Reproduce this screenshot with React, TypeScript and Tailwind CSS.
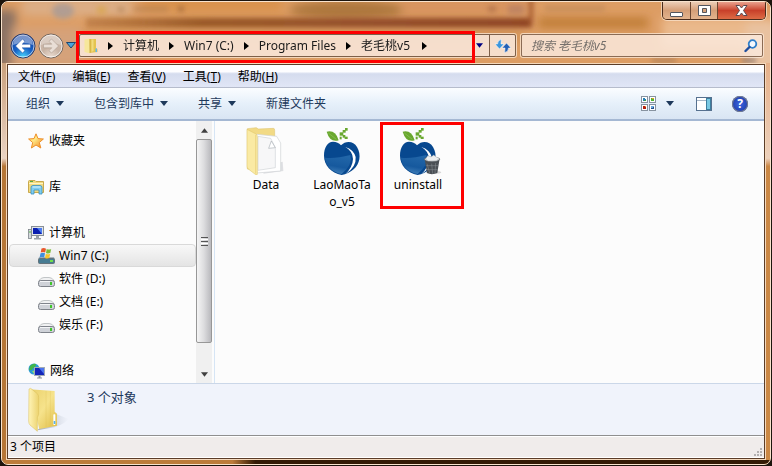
import type { ReactNode } from "react";

const crumbs = ["计算机", "Win7 (C:)", "Program Files", "老毛桃v5"];

const menus = [
  { label: "文件", key: "F" },
  { label: "编辑", key: "E" },
  { label: "查看", key: "V" },
  { label: "工具", key: "T" },
  { label: "帮助", key: "H" },
];

const commands = [
  { label: "组织", menu: true },
  { label: "包含到库中", menu: true },
  { label: "共享", menu: true },
  { label: "新建文件夹", menu: false },
];

/* blurred desktop showing through the glass title bar */
function GlassBackdrop() {
  return (
    <svg
      className="absolute inset-0 h-full w-full"
      viewBox="0 0 768 62"
      preserveAspectRatio="none"
      aria-hidden="true"
    >
      <defs>
        <filter id="soft" x="-20%" y="-60%" width="140%" height="220%">
          <feGaussianBlur stdDeviation="5" />
        </filter>
        <filter id="soft2" x="-20%" y="-100%" width="140%" height="300%">
          <feGaussianBlur stdDeviation="2.5" />
        </filter>
        <linearGradient id="band" x1="0" x2="1">
          <stop offset="0" stopColor="#a8672f" stopOpacity="0.5" />
          <stop offset="0.25" stopColor="#9a5a26" />
          <stop offset="0.6" stopColor="#95502b" />
          <stop offset="1" stopColor="#8f4524" />
        </linearGradient>
      </defs>
      <rect width="768" height="62" fill="#dd9d64" />
      <g filter="url(#soft)">
        <rect x="-10" y="8" width="24" height="60" fill="#8b7263" />
        <rect x="20" y="-4" width="110" height="18" fill="#dcae86" />
        <rect x="140" y="-4" width="140" height="14" fill="#d9924c" />
        <ellipse cx="345" cy="8" rx="58" ry="10" fill="#ad773e" />
        <rect x="400" y="-4" width="128" height="18" fill="#d8945f" />
        <rect x="536" y="16" width="110" height="10" fill="#bd7a32" />
        <rect x="660" y="16" width="110" height="30" fill="#eab98c" />
        <rect x="10" y="26" width="70" height="40" fill="#d5a27a" />
        <rect x="80" y="30" width="440" height="10" fill="#cf9154" />
        <rect x="744" y="20" width="40" height="50" fill="#e9c2a0" />
      </g>
      <g filter="url(#soft2)">
        <rect x="84" y="16" width="446" height="10" fill="url(#band)" />
        <rect x="527" y="-4" width="4" height="27" fill="#a65a2e" />
        <ellipse cx="61" cy="9" rx="11" ry="8" fill="#a79a96" opacity="0.8" />
        <rect x="95" y="4" width="9" height="8" fill="#d9a541" opacity="0.6" />
        <rect x="116" y="5" width="6" height="5" fill="#a77848" opacity="0.6" />
        <rect x="132" y="4" width="34" height="6" fill="#b08054" opacity="0.5" />
        <rect x="176" y="4" width="6" height="6" fill="#946034" opacity="0.6" />
        <rect x="486" y="4" width="8" height="6" fill="#a3653f" opacity="0.6" />
        <rect x="506" y="3" width="16" height="9" fill="#b98062" opacity="0.8" />
        <rect x="543" y="3" width="60" height="7" fill="#c58b5a" opacity="0.7" />
        <rect x="650" y="57" width="24" height="5" fill="#a97d58" opacity="0.7" />
        <rect x="740" y="57" width="14" height="5" fill="#81706a" opacity="0.7" />
        <rect x="92" y="57" width="60" height="4" fill="#b87f4a" opacity="0.6" />
      </g>
    </svg>
  );
}

function Triangle({ className }: { className?: string }) {
  return (
    <svg className={className} width="8" height="5" viewBox="0 0 8 5" aria-hidden="true">
      <path d="M0 0H8L4 5Z" fill="currentColor" />
    </svg>
  );
}

function RoundArrow({ active }: { active?: boolean }) {
  const id = active ? "navOn" : "navOff";
  return (
    <svg width="26" height="26" viewBox="0 0 26 26" aria-hidden="true">
      <defs>
        <radialGradient id={id} cx="0.5" cy="0.95" r="0.9">
          <stop offset="0" stopColor={active ? "#49d3fb" : "#eadbd0"} />
          <stop offset="0.45" stopColor={active ? "#1661c6" : "#c8b3a4"} />
          <stop offset="1" stopColor={active ? "#1742a0" : "#cdb9ab"} />
        </radialGradient>
      </defs>
      <circle cx="13" cy="13" r="12" fill={`url(#${id})`} stroke={active ? "#2b3b66" : "#75685f"} />
      <circle cx="13" cy="13" r="11" fill="none" stroke="#ffffff" strokeOpacity={active ? 0.65 : 0.7} />
      <path d="M3 12A10 10 0 0 1 23 12Q13 8 3 12Z" fill="#ffffff" opacity={active ? 0.42 : 0.3} />
      <path
        d={
          active
            ? "M12.500 6L5.500 13L12.500 20L15 17.600L12.200 14.800H20.500V11.200H12.200L15 8.400Z"
            : "M13.500 6L20.500 13L13.500 20L11 17.600L13.800 14.800H5.500V11.200H13.800L11 8.400Z"
        }
        fill={active ? "#ffffff" : "#e9ded6"}
        stroke={active ? "#1b4a9a" : "#a59589"}
        strokeWidth="0.5"
      />
    </svg>
  );
}

function SmallFolder() {
  return (
    <svg width="14" height="16" viewBox="0 0 14 16" aria-hidden="true">
      <path d="M5 1H12V10L13.500 11V14L5 15Z" fill="#e4c44f" />
      <path d="M0.500 1.500L5.500 0.500L6 15.500L0.500 14Z" fill="#f7e79b" />
      <path d="M6 1V15" stroke="#c9a63c" strokeWidth="0.8" />
      <path d="M7.500 1.500H9.500V13L7.500 14Z" fill="#f1db7c" />
      <rect x="11.500" y="10.500" width="1.500" height="3.500" fill="#5fb8ec" />
    </svg>
  );
}

function BigFolder() {
  return (
    <svg width="44" height="48" viewBox="78 48 132 144" aria-hidden="true">
      <defs>
        <linearGradient id="flap" x1="0" x2="1">
          <stop offset="0" stopColor="#fff4b8" />
          <stop offset="1" stopColor="#ecd36f" />
        </linearGradient>
        <linearGradient id="back" x1="0" x2="1" y2="1">
          <stop offset="0" stopColor="#ead06a" />
          <stop offset="0.5" stopColor="#f6e38c" />
          <stop offset="1" stopColor="#dfbc45" />
        </linearGradient>
        <linearGradient id="shade" x1="0" x2="1">
          <stop offset="0" stopColor="#8991a0" stopOpacity="0.8" />
          <stop offset="1" stopColor="#b5bdcc" stopOpacity="0" />
        </linearGradient>
      </defs>
      <path d="M112 178L170 130L206 144Q182 168 146 172Z" fill="url(#shade)" />
      <path d="M88 55L120 57L164 60V122L171 128V164L118 174Z" fill="url(#back)" />
      <path d="M138 60V168M151 60V165" stroke="#d9ba4b" strokeWidth="2" opacity="0.4" />
      <path
        d="M87 54L92 52L112 68Q116 72 116 80V130L112 140V181L90 162Q86 158 86 150Z"
        fill="url(#flap)"
        stroke="#d9bd58"
        strokeWidth="1.500"
      />
      <rect x="160" y="130" width="6" height="32" rx="2" fill="#ffffff" />
      <rect x="161" y="150" width="5" height="9" fill="#55b2ef" />
    </svg>
  );
}

function DataFolder() {
  return (
    <svg width="48" height="48" viewBox="36 36 144 144" aria-hidden="true">
      <path d="M100 176L160 168L158 140L110 150Z" fill="#9aa0a8" opacity="0.3" />
      <path d="M52 41L78 38Q82 38 84 42L130 40Q134 40 134 46V150L80 168L52 162Z" fill="#f2da85" stroke="#dcc06a" strokeWidth="1.500" />
      <path d="M80 58L140 64L152 84V168L80 174Z" fill="#ffffff" stroke="#cfd2d5" strokeWidth="2" />
      <path d="M84 64L122 70L136 98V158L84 166Z" fill="#f7f7f8" stroke="#c3c6ca" strokeWidth="1.500" />
      <path d="M116 100L124 78L136 98Z" fill="#ffffff" stroke="#aab0b6" strokeWidth="2" />
      <path d="M51 43L78 57Q82 60 82 66V178Q81 181 77 179L55 162Q51 159 51 154Z" fill="#faeaa4" stroke="#dcc264" strokeWidth="1.500" />
      <path d="M77 60V176" stroke="#ecd684" strokeWidth="3" />
    </svg>
  );
}

function Peach({ bin }: { bin?: boolean }) {
  const id = bin ? "peachB" : "peachA";
  return (
    <svg width="48" height="48" viewBox="267 36 144 144" aria-hidden="true">
      <defs>
        <linearGradient id={id} x1="0.600" y1="0" x2="0.350" y2="1">
          <stop offset="0" stopColor="#2e74b4" />
          <stop offset="0.600" stopColor="#1c60a4" />
          <stop offset="1" stopColor="#5c98cc" />
        </linearGradient>
      </defs>
      <path d="M293 50Q320 44 329 76Q303 84 293 50Z" fill="#69a82f" />
      <path d="M298 54L322 73" stroke="#8fc45a" strokeWidth="2" />
      <g fill="#69a82f">
        <rect x="348" y="39" width="8" height="8" />
        <rect x="341" y="45" width="9" height="8" />
        <rect x="332" y="52" width="11" height="10" />
        <rect x="341" y="60" width="8" height="8" />
        <rect x="347" y="65" width="9" height="7" />
        <rect x="332" y="65" width="6" height="8" />
      </g>
      <path
        d="M336 91C350 76 374 78 384 96C398 120 392 147 374 163Q358 177 338 180C306 174 285 150 285 122C285 97 296 80 312 80Q327 80 336 91Z"
        fill="#07488f"
      />
      <path d="M288 128Q318 132 364 120Q372 150 338 177C309 171 290 152 288 128Z" fill={`url(#${id})`} opacity="0.700" />
      <path d="M349 96Q371 108 372 132Q371 156 349 178Q383 156 380 126Q374 104 349 96Z" fill="#ffffff" />
      {bin && (
        <g>
          <ellipse cx="386" cy="172" rx="23" ry="5" fill="#6b6b6b" opacity="0.25" />
          <path d="M359 132L404 130L397 174Q380 181 366 174Z" fill="#4a4f54" />
          <path
            d="M366 146L374 174M380 146L383 176M392 144L390 174M362 152H401M365 164H398"
            stroke="#8b9297"
            strokeWidth="1.500"
          />
          <ellipse cx="381" cy="133" rx="23" ry="7" fill="#c6cacd" stroke="#50565b" strokeWidth="2" />
          <path d="M362 132L368 122L378 126L386 120L394 126L403 130L394 137L370 138Z" fill="#eceeef" stroke="#9aa0a5" />
        </g>
      )}
    </svg>
  );
}

function StarIcon() {
  return (
    <svg width="16" height="16" viewBox="0 0 16 16" aria-hidden="true">
      <defs>
        <linearGradient id="star" x1="0" y1="0" x2="1" y2="1">
          <stop offset="0" stopColor="#ffc84a" />
          <stop offset="0.400" stopColor="#ffe987" />
          <stop offset="1" stopColor="#f0801a" />
        </linearGradient>
      </defs>
      <path
        d="M8 0.800L10 5.600L15.400 6L11.300 9.500L12.800 15L8 12L3.400 15L4.700 9.500L0.600 6L6 5.600Z"
        fill="url(#star)"
        stroke="#ee8f2a"
        strokeLinejoin="round"
      />
    </svg>
  );
}

function LibraryIcon() {
  return (
    <svg width="16" height="16" viewBox="0 0 16 16" aria-hidden="true">
      <path d="M0.500 2.500Q0.500 1.500 1.500 1.500H7L8 2.500H15.500V13.500H0.500Z" fill="#f2da80" stroke="#c9a94c" />
      <path d="M1 4.500H15" stroke="#fff5c4" />
      <path d="M2 2.500H5" stroke="#56a847" />
      <path d="M3 8.500Q3 6.500 5 6.500H12Q14 6.500 14 8.500V15H11V11H6V15H3Z" fill="#7fcdf0" stroke="#3b8fc0" strokeWidth="0.800" />
      <path d="M4.500 8H12.500" stroke="#dcf4ff" />
    </svg>
  );
}

function ComputerIcon() {
  return (
    <svg width="16" height="16" viewBox="0 0 16 16" aria-hidden="true">
      <rect x="0.500" y="4.500" width="3" height="9" fill="#d5d9dc" stroke="#7d848a" strokeWidth="0.800" />
      <rect x="1.500" y="6" width="1" height="2" fill="#54b848" />
      <rect x="3.500" y="1.500" width="12" height="9" fill="#dfe3e6" stroke="#888f97" />
      <rect x="5" y="3" width="9" height="6" fill="#0b1fb0" />
      <path d="M9 3H14V9Z" fill="#4d7df0" />
      <path d="M8 11H11V13H13V14.500H6V13H8Z" fill="#9aa1a8" />
    </svg>
  );
}

function DriveIcon({ windows }: { windows?: boolean }) {
  return (
    <svg width="17" height="16" viewBox="0 0 17 16" aria-hidden="true">
      {windows ? (
        <>
          <path d="M1 9H16L16.500 11H0.500Z" fill="#a6b3bb" />
          <rect x="0.500" y="10.500" width="16" height="5" rx="1" fill="#477b92" stroke="#64727b" />
          <path d="M3.500 0.500Q6 -0.500 8 0.700L7.200 4.500Q5 3.500 2.700 4.500Z" fill="#e8582c" />
          <path d="M8.700 1Q11 2.200 13.200 1L12.300 5Q10 6 8 4.900Z" fill="#7cbb38" />
          <path d="M2.500 5.200Q5 4.200 7 5.300L6.200 9.500Q4 8.500 1.600 9.500Z" fill="#3e8ede" />
          <path d="M7.800 5.700Q10 6.700 12.200 5.700L11.300 10Q9 11 7 9.900Z" fill="#f7c52d" />
          <rect x="12" y="12" width="3" height="2" fill="#6fe04c" />
        </>
      ) : (
        <>
          <path d="M1 9.500Q3 6.500 6 6.500H11Q14 6.500 16 9.500Z" fill="#f0f1f2" stroke="#b4b7ba" strokeWidth="0.800" />
          <rect x="0.500" y="9.500" width="16" height="6" rx="2" fill="#cfd2d8" stroke="#7f838b" />
          <path d="M2 10.500H12" stroke="#f4f5f7" />
          <rect x="12" y="11" width="2" height="3" fill="#3fc62b" />
        </>
      )}
    </svg>
  );
}

function NetworkIcon() {
  return (
    <svg width="17" height="16" viewBox="0 0 17 16" aria-hidden="true">
      <circle cx="6" cy="6" r="5.500" fill="#2b9ad6" />
      <path d="M2 3Q5 0 8 1Q8 4 5 5Q4 8 1 7Z" fill="#41b649" />
      <path d="M4 8L7 7.500L6 11Z" fill="#8be070" />
      <rect x="6.500" y="4.500" width="10" height="8" fill="#1325b8" stroke="#a0a9b5" />
      <path d="M11 5H16V11Z" fill="#4a74ee" />
      <path d="M10.500 13H12.500V14.500H14V15.500H9V14.500H10.500Z" fill="#8d949c" />
    </svg>
  );
}

function ViewsIcon() {
  return (
    <svg width="15" height="15" viewBox="0 0 15 15" aria-hidden="true">
      <g fill="#ffffff" stroke="#8793a0">
        <rect x="0.500" y="0.500" width="6" height="6" />
        <rect x="8.500" y="0.500" width="6" height="6" />
        <rect x="0.500" y="8.500" width="6" height="6" />
        <rect x="8.500" y="8.500" width="6" height="6" />
      </g>
      <path d="M2 2H4V3H5V5H2Z" fill="#237fb4" />
      <path d="M3 4H5V5H3Z" fill="#3f9a4a" />
      <path d="M10 2H13V5H10Z" fill="#4fb432" />
      <path d="M11 2H13V3H11Z" fill="#e3a025" />
      <path d="M2 10H5V13H2Z" fill="#b5200f" />
      <path d="M4 10H5V11H4Z" fill="#e79b27" />
      <path d="M10 10H13V13H10Z" fill="#6ba7dc" />
      <path d="M10 12H12V11H13V13H10Z" fill="#24518e" />
    </svg>
  );
}

function NavItem({
  icon,
  label,
  child,
  selected,
}: {
  icon: ReactNode;
  label: string;
  child?: boolean;
  selected?: boolean;
}) {
  return (
    <button
      type="button"
      aria-current={selected ? "true" : undefined}
      className={`ml-px flex h-[23px] w-full items-center rounded-sm border text-left ${
        child ? "gap-1 pl-7" : "gap-[5px] pl-[18px]"
      } ${
        selected
          ? "border-[#d9d9d9] bg-linear-to-b from-[#f8f8f8] to-[#e4e4e4]"
          : "border-transparent"
      }`}
    >
      {icon}
      <span>{label}</span>
    </button>
  );
}

function Sidebar() {
  return (
    <nav aria-label="导航窗格" className="flex w-[188px] shrink-0 flex-col gap-[23px] pt-2 pr-px">
      <NavItem icon={<StarIcon />} label="收藏夹" />
      <NavItem icon={<LibraryIcon />} label="库" />
      <div>
        <NavItem icon={<ComputerIcon />} label="计算机" />
        <NavItem icon={<DriveIcon windows />} label="Win7 (C:)" child selected />
        <NavItem icon={<DriveIcon />} label="软件 (D:)" child />
        <NavItem icon={<DriveIcon />} label="文档 (E:)" child />
        <NavItem icon={<DriveIcon />} label="娱乐 (F:)" child />
      </div>
      <NavItem icon={<NetworkIcon />} label="网络" />
    </nav>
  );
}

function Scrollbar() {
  return (
    <div className="flex w-4 shrink-0 flex-col bg-[#f0f0f0]">
      <button type="button" aria-label="向上滚动" className="flex h-[18px] items-center justify-center text-[#404040]">
        <Triangle className="w-[7px] rotate-180" />
      </button>
      <div className="flex grow flex-col">
        <div className="flex grow flex-col items-center justify-center gap-px rounded-xs border border-[#979797] bg-linear-to-r from-[#f5f5f5] via-[#dcdcde] to-[#b9b9bd]">
          <span className="h-px w-[7px] bg-[#555]" />
          <span className="h-px w-[7px] bg-white" />
          <span className="h-px w-[7px] bg-[#555]" />
          <span className="h-px w-[7px] bg-white" />
          <span className="h-px w-[7px] bg-[#555]" />
        </div>
        <div className="h-[22px]" />
      </div>
      <button type="button" aria-label="向下滚动" className="flex h-[18px] items-center justify-center text-[#404040]">
        <Triangle className="w-[7px]" />
      </button>
    </div>
  );
}

function FileItem({ icon, label, marked }: { icon: ReactNode; label: string; marked?: boolean }) {
  return (
    <button type="button" className="relative flex w-[76px] flex-col items-center gap-px">
      {icon}
      <span className="w-16 text-center leading-[17px] break-all">{label}</span>
      {marked && <span className="absolute -top-[5px] left-0 h-[87px] w-[84px] border-3 border-[#fe0000]" />}
    </button>
  );
}

function CaptionButtons() {
  const glyph = "flex items-center justify-center";
  return (
    <div className="flex h-[18px] rounded-b-[5px] border border-t-0 border-[#4a2c1c] shadow-[0_0_0_1px_rgba(255,240,225,0.6)]">
      <button
        type="button"
        aria-label="最小化"
        className={`${glyph} w-7 rounded-bl border-r border-[#6b4630] bg-linear-to-b from-[#eccdb6] via-[#d59f78] via-50% to-[#e3b48e]`}
      >
        <svg width="13" height="14" viewBox="0 0 13 14" aria-hidden="true">
          <rect x="0.500" y="8.500" width="12" height="4" rx="0.500" fill="#ffffff" stroke="#53565f" />
        </svg>
      </button>
      <button
        type="button"
        aria-label="最大化"
        className={`${glyph} w-[27px] border-r border-[#6b4630] bg-linear-to-b from-[#eccdb6] via-[#d59f78] via-50% to-[#e3b48e]`}
      >
        <svg width="13" height="11" viewBox="0 0 13 11" aria-hidden="true">
          <path d="M0.500 0.500H12.500V10.500H0.500ZM4.500 3.500V7.500H8.500V3.500Z" fill="#ffffff" stroke="#53565f" fillRule="evenodd" />
        </svg>
      </button>
      <button
        type="button"
        aria-label="关闭"
        className={`${glyph} w-[47px] rounded-br bg-linear-to-b from-[#e9a08c] via-[#c8402a] via-50% to-[#dd6b45]`}
      >
        <svg width="13" height="12" viewBox="0 0 13 12" aria-hidden="true">
          <path
            d="M1 0.500H4.500L6.500 3L8.500 0.500H12L8.500 5.500L12 10.500H8.500L6.500 8L4.500 10.500H1L4.500 5.500Z"
            fill="#ffffff"
            stroke="#5a4a50"
          />
        </svg>
      </button>
    </div>
  );
}

function AddressBar() {
  return (
    <div className="relative flex h-[25px] w-[437px] items-center">
      <div className="flex h-[23px] w-full items-center rounded-xs border border-[#7d5f49] bg-[#f8e6d8]/90 shadow-[0_0_0_1px_rgba(255,240,225,0.7)]">
        <div className="flex grow items-center pl-1">
          <SmallFolder />
          <ol className="flex items-center">
            {crumbs.map((c) => (
              <li key={c} className="flex items-center">
                <svg className="mx-[10px]" width="5" height="8" viewBox="0 0 5 8" aria-hidden="true">
                  <path d="M0 0L5 4L0 8Z" fill="#000000" />
                </svg>
                <a href="#" className="text-[#1a1a1a]">
                  {c}
                </a>
              </li>
            ))}
          </ol>
          <svg className="mx-3" width="5" height="8" viewBox="0 0 5 8" aria-hidden="true">
            <path d="M0 0L5 4L0 8Z" fill="#000000" />
          </svg>
        </div>
        <button type="button" aria-label="以前的位置" className="flex w-5 items-center justify-center text-[#000080]">
          <Triangle className="w-[7px]" />
        </button>
        <button type="button" aria-label="刷新" className="flex h-full w-[26px] items-center justify-center border-l border-[#7d5f49]">
          <svg width="16" height="14" viewBox="0 0 16 14" aria-hidden="true">
            <path d="M6.500 0.500Q2.500 1 2.500 5H0L4.500 10L9 5H6Q6 2.500 6.500 0.500Z" fill="#3d96dc" stroke="#ffffff" strokeWidth="0.500" />
            <path d="M9.500 13.500Q13.500 13 13.500 9H16L11.500 4L7 9H10Q10 11.500 9.500 13.500Z" fill="#2461b6" stroke="#ffffff" strokeWidth="0.500" />
          </svg>
        </button>
      </div>
      <span className="pointer-events-none absolute -top-[2px] -left-[3px] h-8 w-[399px] border-3 border-[#fe0000]" />
    </div>
  );
}

export default function App() {
  return (
    <div className="bg-[#1d150d] p-px font-['Noto_Sans','Noto_Sans_CJK_SC',sans-serif] text-xs text-black">
      <div className="flex min-h-[calc(100vh-2px)] flex-col overflow-hidden rounded-[7px] border border-[#f9e3cd] bg-[#c3803f]">
        <header className="relative z-10">
          <GlassBackdrop />
          <div className="relative flex justify-end pr-1">
            <CaptionButtons />
          </div>
          <div className="relative flex items-center pt-[13px] pr-[7px] pb-[5px] pl-2">
            <div className="flex h-[25px] items-center gap-[2px]">
              <button type="button" aria-label="后退">
                <RoundArrow active />
              </button>
              <button type="button" aria-label="前进">
                <RoundArrow />
              </button>
              <button type="button" aria-label="最近浏览的位置" className="pr-[3px]">
                <svg width="10" height="7" viewBox="0 0 10 7" aria-hidden="true">
                  <path d="M0.500 0.500H9.500L5 6Z" fill="#49a5dc" stroke="#1d4670" />
                </svg>
              </button>
            </div>
            <AddressBar />
            <div className="ml-[5px] flex h-[23px] min-w-0 grow items-center rounded-xs border border-[#8a6b55] bg-[#fae9dc]/85 pr-1 pl-[9px] shadow-[0_0_0_1px_rgba(255,240,225,0.7)]">
              <input
                type="search"
                aria-label="搜索"
                placeholder="搜索 老毛桃v5"
                className="min-w-0 grow bg-transparent italic outline-none placeholder:text-[#76706c]"
              />
              <svg width="14" height="14" viewBox="0 0 14 14" aria-hidden="true">
                <circle cx="8.500" cy="5" r="3.800" fill="#f4f8fd" stroke="#2f7fca" strokeWidth="1.800" />
                <path d="M5.500 8L1.500 12" stroke="#1f4f9e" strokeWidth="2.400" strokeLinecap="round" />
              </svg>
            </div>
          </div>
        </header>

        <div className="flex grow">
          <div className="w-1 bg-linear-to-b from-[#c9a07c] via-[#ead3c3] via-24% to-[#b67636] to-26%" />
          <div className="flex min-w-0 grow flex-col border border-[#f5d9bd]">
            <div className="flex grow flex-col border border-[#5b3d28]">
              <div className="flex h-[23px] items-center gap-[17px] border-b border-[#b6bccc] bg-linear-to-b from-[#fdfdff] from-30% via-[#d5dcee] via-40% to-[#e1e6f6] pt-px pl-[10px]">
                {menus.map((m) => (
                  <button key={m.key} type="button">
                    {m.label}(<u>{m.key}</u>)
                  </button>
                ))}
              </div>

              <div className="flex h-[33px] items-center border-b-2 border-[#a5b8d3] bg-linear-to-b from-[#fbfdff] via-[#e6f0fa] via-50% to-[#d9e5f3] pr-4 pl-[18px] text-[#1e395b]">
                <div className="flex grow items-center gap-[30px]">
                  {commands.map((c) => (
                    <button key={c.label} type="button" className="flex items-center gap-[6px]">
                      {c.label}
                      {c.menu && <Triangle />}
                    </button>
                  ))}
                </div>
                <button type="button" aria-label="更改视图">
                  <ViewsIcon />
                </button>
                <button type="button" aria-label="更多视图选项" className="mr-[22px] ml-[10px]">
                  <Triangle />
                </button>
                <button type="button" aria-label="预览窗格" className="mr-5">
                  <svg width="16" height="14" viewBox="0 0 16 14" aria-hidden="true">
                    <rect x="0.500" y="0.500" width="15" height="13" fill="#ffffff" stroke="#56718f" />
                    <path d="M1 3.500H10" stroke="#a9b8c8" />
                    <rect x="10.500" y="1.500" width="4" height="11" fill="#79c9e3" stroke="#3d7f9f" />
                  </svg>
                </button>
                <button
                  type="button"
                  aria-label="获取帮助"
                  className="flex size-4 items-center justify-center rounded-full bg-radial from-[#3c66e0] to-[#172f9c] text-xs leading-none font-bold text-white ring-1 ring-[#777e8c] ring-inset"
                >
                  ?
                </button>
              </div>

              <div className="flex grow bg-[#fcfcfc]">
                <Sidebar />
                <Scrollbar />
                <main className="ml-[2px] flex grow items-start border-l border-[#d6e5f5] pt-[6px] pl-[13px]">
                  <FileItem icon={<DataFolder />} label="Data" />
                  <FileItem icon={<Peach />} label="LaoMaoTao_v5" />
                  <FileItem icon={<Peach bin />} label="uninstall" marked />
                </main>
              </div>

              <section className="flex h-[52px] gap-[17px] border-t border-[#cbd7e8] bg-[#f0f3fb] pt-[3px] pl-[18px]">
                <BigFolder />
                <p className="text-[13px] leading-5 text-[#1e395b]">3 个对象</p>
              </section>

              <footer className="border-t border-[#8f8f8f] bg-white pt-px pb-px">
                <div className="flex h-5 items-center justify-between bg-[#f0eceb] pr-px pl-[2px]">
                  <p>3 个项目</p>
                  <svg className="self-end" width="9" height="9" viewBox="0 0 9 9" aria-hidden="true">
                    <path d="M6 0H8V2H6ZM3 3H5V5H3ZM6 3H8V5H6ZM0 6H2V8H0ZM3 6H5V8H3ZM6 6H8V8H6Z" fill="#b3b0b0" />
                  </svg>
                </div>
              </footer>
            </div>
          </div>
          <div className="w-1 bg-linear-to-b from-[#e6b088] via-[#ecd0bb] via-24% to-[#cb8845] to-26%" />
        </div>
        <div className="h-1 bg-linear-to-r from-[#bd7c3b] from-30% via-[#331a05] via-33% to-[#331a05] to-89%" />
      </div>
    </div>
  );
}
